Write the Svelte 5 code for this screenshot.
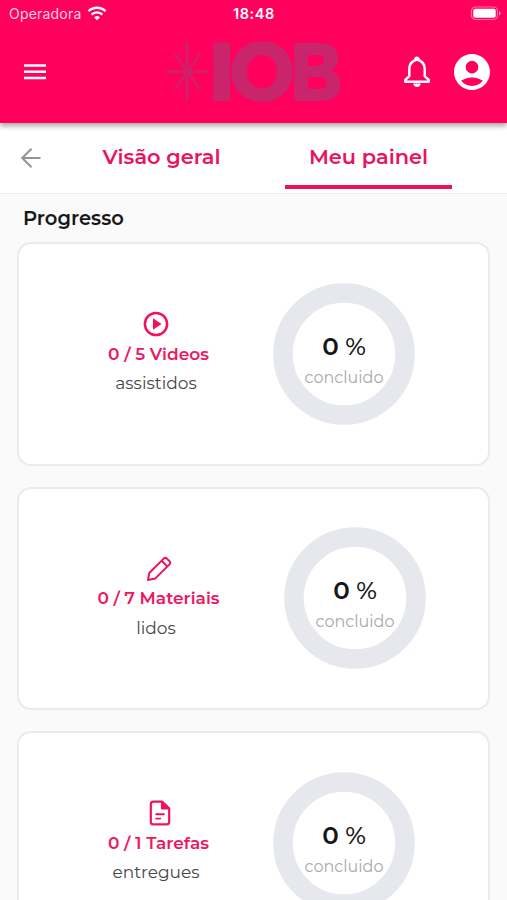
<script lang="ts">
    let activeTab = $state('painel');

    const tabs = [
        { id: 'geral', label: 'Visão geral' },
        { id: 'painel', label: 'Meu painel' }
    ];

    const cards = [
        { kind: 'videos', count: '0 / 5 Videos', label: 'assistidos', percent: 0 },
        { kind: 'materiais', count: '0 / 7 Materiais', label: 'lidos', percent: 0 },
        { kind: 'tarefas', count: '0 / 1 Tarefas', label: 'entregues', percent: 0 }
    ];

    const ringLength = 2 * Math.PI * 61;
</script>

<div class="screen">
    <header>
        <div class="status">
            <div class="carrier">
                <span>Operadora</span>
                <svg width="20" height="15" viewBox="0 0 20 15" fill="none" stroke="#fff" stroke-width="2.3">
                    <path d="M1.5 5.2a12.2 12.2 0 0 1 17 0" />
                    <path d="M4.6 8.6a7.7 7.7 0 0 1 10.8 0" />
                    <path d="M10 14.3l-2.9-2.9a4.1 4.1 0 0 1 5.8 0z" fill="#fff" stroke="none" />
                </svg>
            </div>
            <span class="clock">18:48</span>
            <svg class="battery" width="32" height="15" viewBox="0 0 32 15">
                <rect x="1.5" y="1" width="26" height="12.5" rx="4" fill="none" stroke="#ff6f9f" stroke-width="1.2" />
                <rect x="3.3" y="2.8" width="22.4" height="9" rx="2" fill="#fff" />
                <path d="M29 5v4.5q1.7-.7 1.7-2.25T29 5z" fill="#ff8fb4" />
            </svg>
        </div>

        <div class="appbar">
            <button class="menu" aria-label="Menu">
                <svg width="24" height="18" viewBox="0 0 24 18" stroke="#fff" stroke-width="2.5">
                    <path d="M1 2.6h22M1 8.8h22M1 15h22" />
                </svg>
            </button>

            <svg class="logo" width="190" height="120" viewBox="0 -28 190 120">
                <g stroke="#c9256c" stroke-width="3" stroke-linecap="round" opacity=".85">
                    <path d="M25 3.5v56M5 31.5h41M13.5 14.5l24 34M37.5 14.5l-24 34" />
                </g>
                <g class="word">
                    <text x="45.5" y="61">I</text>
                    <text x="66.5" y="61" textLength="67" lengthAdjust="spacingAndGlyphs">O</text>
                    <text x="127.5" y="61" textLength="53" lengthAdjust="spacingAndGlyphs">B</text>
                </g>
            </svg>

            <div class="actions">
                <svg width="28" height="32" viewBox="0 0 28 32" fill="none" stroke="#fff" stroke-width="2.4" stroke-linejoin="round">
                    <path d="M14 3.5c-5 1.2-7.7 4.7-7.7 9.5v7.2L2.2 24v1.8h23.6V24l-4.1-3.8V13c0-4.8-2.7-8.3-7.7-9.5z" />
                    <path d="M12.5 3.2a1.5 1.5 0 0 1 3 0" />
                    <path d="M10.4 27.5a3.6 3.4 0 0 0 7.2 0z" fill="#fff" stroke="none" />
                </svg>
                <svg width="36" height="36" viewBox="2 2 20 20" fill="#fff">
                    <path d="M12 2C6.48 2 2 6.48 2 12s4.48 10 10 10 10-4.48 10-10S17.52 2 12 2zm0 3.8a3.5 3.5 0 1 1 0 7 3.5 3.5 0 0 1 0-7zm0 14c-2.4 0-4.6-1.1-6-2.9 1.5-1.2 3.7-1.9 6-1.9s4.5.7 6 1.9c-1.4 1.8-3.6 2.9-6 2.9z" />
                </svg>
            </div>
        </div>
    </header>

    <nav>
        <button class="back" aria-label="Voltar">
            <svg width="22" height="22" viewBox="0 0 22 22" fill="none" stroke="#949494" stroke-width="2">
                <path d="M20.5 11H2.5M11.5 1.7L2.2 11l9.3 9.3" />
            </svg>
        </button>
        {#each tabs as tab}
            <button class="tab" class:active={activeTab === tab.id} onclick={() => activeTab = tab.id}>{tab.label}</button>
        {/each}
    </nav>

    <main>
        <h2>Progresso</h2>

        {#each cards as card}
            <section class={card.kind}>
                <div class="stat">
                    <div class="icon">
                        {#if card.kind === 'videos'}
                            <svg width="26" height="26" viewBox="0 0 26 26">
                                <circle cx="13" cy="13" r="11.1" fill="none" stroke="#f0125c" stroke-width="2.5" />
                                <path d="M10 7.2v11.6l8.5-5.8z" fill="#f0125c" />
                            </svg>
                        {:else if card.kind === 'materiais'}
                            <svg width="26" height="26" viewBox="0 0 26 26" fill="none" stroke="#f0125c" stroke-width="2" stroke-linejoin="round">
                                <path d="M2 24l1.3-7L17.7 2.6q1.6-1.4 3.2 0l2.6 2.6q1.4 1.6 0 3.2L9.1 22.6z" />
                                <path d="M15.6 4.8l5.8 5.8" />
                            </svg>
                        {:else}
                            <svg width="22" height="26" viewBox="0 0 22 26" fill="none" stroke="#f0125c" stroke-width="2.2" stroke-linejoin="round" stroke-linecap="round">
                                <path d="M13 1.6H4.4q-2.6 0-2.6 2.6v17.6q0 2.6 2.6 2.6h13.2q2.6 0 2.6-2.6V8.5z" />
                                <path d="M13 2v6.5h7z" fill="#f0125c" />
                                <path d="M7.2 14.2h7.6M7.2 18.6h4" stroke-width="1.9" />
                            </svg>
                        {/if}
                    </div>
                    <strong>{card.count}</strong>
                    <p>{card.label}</p>
                </div>

                <div class="ring">
                    <svg width="142" height="142" viewBox="0 0 142 142" fill="none" stroke-width="19.5">
                        <circle cx="71" cy="71" r="61" stroke="#e7e8ee" />
                        {#if card.percent > 0}
                            <circle cx="71" cy="71" r="61" stroke="#f0125c" stroke-dasharray="{ringLength * card.percent / 100} {ringLength}" />
                        {/if}
                    </svg>
                    <div class="value">
                        <div class="percent"><b>{card.percent}</b> %</div>
                        <small>concluido</small>
                    </div>
                </div>
            </section>
        {/each}
    </main>
</div>

<style>
    :global(body){
        background-color: #fafafa;
    }

    .screen{
        width: 100%;
        height: 900px;
        overflow: hidden;
        background-color: #fafafa;
        font-family: Montserrat, Inter, sans-serif;
    }

    button{
        border: 0;
        padding: 0;
        background: none;
        font-family: inherit;
        cursor: pointer;
    }

    svg{
        display: block;
        flex-shrink: 0;
    }

    /* header */
    header{
        position: relative;
        z-index: 2;
        height: 123px;
        background-color: #ff005c;
        box-shadow: 0 3px 5px rgba(0,0,0,0.35);
    }

    .status{
        display: grid;
        grid-template-columns: 1fr auto 1fr;
        align-items: center;
        height: 27px;
        padding: 0 5px 0 9px;
        color: #fff;
        font-family: Inter, sans-serif;
        font-size: 14px;
    }

    .carrier{
        display: flex;
        align-items: center;
        gap: 6px;
        color: #ffd3e1;
        letter-spacing: 0.2px;
    }

    .carrier svg{
        margin-top: -1px;
    }

    .clock{
        font-weight: 600;
        font-size: 14.5px;
        letter-spacing: 0.6px;
        margin-right: 3px;
    }

    .battery{
        justify-self: end;
    }

    .appbar{
        display: flex;
        align-items: center;
        height: 90px;
        padding: 0 17px 0 23px;
    }

    .logo{
        margin: -15px 0 -15px 115px;
    }

    .word{
        font-size: 84px;
        font-weight: 800;
        fill: #c9256c;
    }

    .actions{
        display: flex;
        align-items: center;
        gap: 23px;
        margin-left: auto;
    }

    /* tabs */
    nav{
        display: flex;
        box-sizing: border-box;
        height: 71px;
        padding-left: 20px;
        background-color: #fff;
        border-bottom: 1px solid #eee;
    }

    .back{
        width: 58px;
    }

    .tab{
        box-sizing: border-box;
        width: 167px;
        height: 66px;
        padding-top: 5px;
        border-bottom: 4px solid transparent;
        color: #e91360;
        font-size: 20.9px;
        font-weight: 600;
        line-height: 58px;
        white-space: nowrap;
    }

    .tab + .tab{
        margin-left: 40px;
    }

    .tab.active{
        border-bottom-color: #e91360;
    }

    /* progress cards */
    main{
        padding: 0 17px;
    }

    h2{
        height: 48px;
        margin: 0;
        padding-left: 6px;
        color: #181818;
        font-size: 19.5px;
        font-weight: 600;
        line-height: 49px;
    }

    section{
        display: flex;
        box-sizing: border-box;
        height: 223.5px;
        margin-bottom: 21px;
        padding: 38.6px 0 0 63px;
        background-color: #fff;
        border: 2px solid #ebebeb;
        border-radius: 14px;
    }

    .stat{
        display: flex;
        flex-direction: column;
        align-items: center;
        width: 148px;
        padding-top: 28.5px;
        white-space: nowrap;
    }

    .icon{
        height: 28.5px;
    }

    strong{
        margin-left: 5px;
        color: #ee1760;
        font-size: 17px;
        font-weight: 600;
        line-height: 29.5px;
    }

    p{
        margin: 0;
        color: #484848;
        font-size: 17px;
        line-height: 29.5px;
    }

    .ring{
        position: relative;
        margin-left: 43px;
    }

    .materiais .ring{
        margin-left: 54px;
    }

    .materiais .icon{
        margin-left: 5px;
    }

    .tarefas .icon{
        margin-left: 8px;
    }

    .value{
        position: absolute;
        inset: 0 0 auto;
        padding-top: 48px;
        text-align: center;
    }

    .percent{
        color: #161616;
        font-size: 24.5px;
        font-weight: 500;
        line-height: 31px;
    }

    .percent b{
        font-weight: 600;
    }

    small{
        display: block;
        color: #aaa;
        font-size: 16px;
        line-height: 31px;
    }
</style>
